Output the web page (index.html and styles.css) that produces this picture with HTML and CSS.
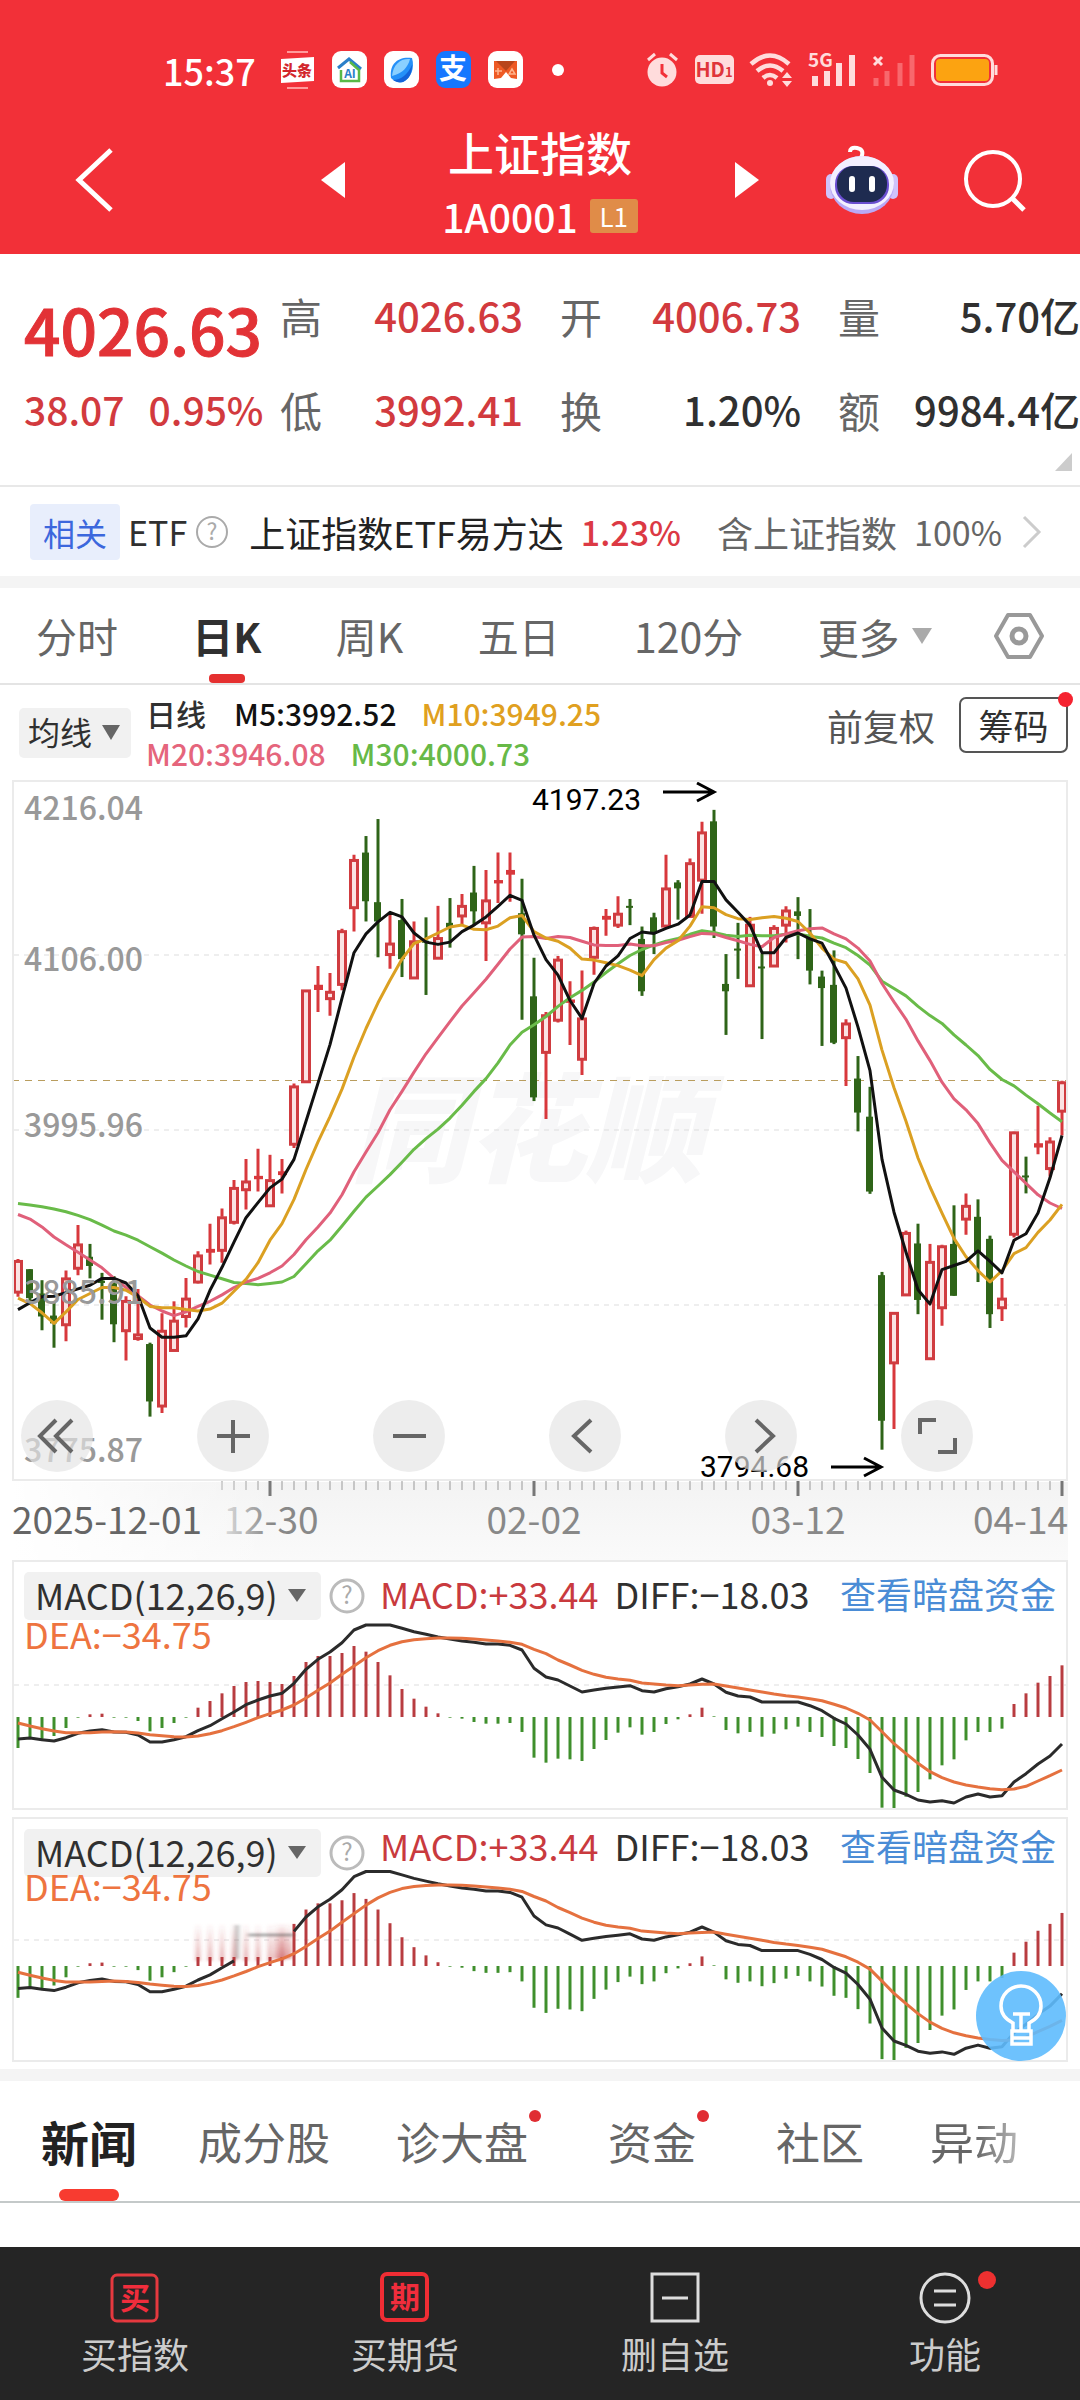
FILE: index.html
```html
<!DOCTYPE html>
<html lang="zh-CN">
<head>
<meta charset="UTF-8">
<meta name="viewport" content="width=device-width, initial-scale=1">
<title>上证指数 1A0001</title>
<link rel="stylesheet" href="styles.css">
</head>
<body>

<header class="header">
  <div class="status">
    <span class="status-time">15:37</span>
    <div class="status-apps">
      <svg width="35" height="38" viewBox="0 0 35 38"><path d="M7 1h21M7 37h21" stroke="#ff9a9a" stroke-width="2"/><path d="M1 8l33-2v24l-33 2z" fill="#fff"/><text x="17" y="25" class="ico-toutiao">头条</text></svg>
      <svg width="35" height="38" viewBox="0 0 35 38"><rect width="35" height="37" rx="9" fill="#fff"/><path d="M6 17L17 8l12 10" fill="none" stroke="#2a7fc9" stroke-width="3"/><path d="M9 19v11h18V19l-9-8" fill="none" stroke="#58b947" stroke-width="2.500"/><text x="18" y="27" class="ico-ai">AI</text></svg>
      <svg width="35" height="38" viewBox="0 0 35 38"><rect width="35" height="37" rx="9" fill="#fff"/><path d="M7 27C5 13 14 5 28 7c3 10-1 20-9 24-5 1-9-1-12-4z" fill="#2590f8"/><path d="M8 25C9 13 17 7 26 8c-2 8-7 14-18 17z" fill="#8ad0ff"/><path d="M9 29c8 0 15-6 19-15 0 9-3 14-9 17-4 1-7 0-10-2z" fill="#1462d8"/></svg>
      <svg width="35" height="38" viewBox="0 0 35 38"><rect width="35" height="37" rx="9" fill="#1677ff"/><text x="17" y="28" class="ico-zhi">支</text></svg>
      <svg width="35" height="38" viewBox="0 0 35 38"><rect width="35" height="37" rx="9" fill="#fff"/><path d="M6 10h9l3 3 3-3h8v18l-6-1-5-6-5 6-7 1z" fill="#ee5a24"/><path d="M8 10h19l-9 10z" fill="#b8451b"/><path d="M7 20h7M10 17v7M24 18l-3 5h6z" stroke="#ffb48c" fill="none" stroke-width="1.500"/></svg>
      <i class="status-dot"></i>
    </div>
    <div class="status-sys">
      <svg width="33" height="36" viewBox="0 0 33 36"><path d="M2 8l7-6M31 8l-7-6" stroke="#ffdcdc" stroke-width="3"/><circle cx="16" cy="20" r="14.500" fill="#ffdcdc"/><path d="M16 12v9l5 4" fill="none" stroke="#f23038" stroke-width="3"/></svg>
      <svg width="39" height="30" viewBox="0 0 39 30"><rect width="39" height="29" rx="5" fill="#ffdcdc"/><text x="19" y="22" class="ico-hd">HD<tspan font-size="13">1</tspan></text></svg>
      <svg width="43" height="34" viewBox="0 0 43 34"><g fill="none" stroke="#ffdcdc" stroke-width="4.500"><path d="M1 11q19-17 38 0M7 18q13-11 26 0M13 25q7-6 14 0"/></g><circle cx="20" cy="30" r="3" fill="#ffdcdc"/><path d="M32 25l5-6 5 6zM32 28l5 6 5-6z" fill="#ffdcdc"/></svg>
      <svg width="47" height="34" viewBox="0 0 47 34"><text x="-1" y="14" class="ico-5g">5G</text><path d="M6 33V23M18 33V18M30 33V10M43 33V2" stroke="#ffdcdc" stroke-width="6"/></svg>
      <svg width="43" height="34" viewBox="0 0 43 34"><path d="M2 4l8 8M10 4l-8 8" stroke="#ffdcdc" stroke-width="3"/><path d="M4 33V25M15 33V18M28 33V10M40 33V2" stroke="#f8686d" stroke-width="5"/></svg>
      <svg width="67" height="32" viewBox="0 0 67 32"><rect x="1.500" y="1.500" width="60" height="29" rx="8" fill="none" stroke="#ffdcdc" stroke-width="3"/><rect x="5" y="5" width="53" height="22" rx="4" fill="#fca311"/><path d="M65 11v10" stroke="#ffdcdc" stroke-width="3"/></svg>
    </div>
  </div>
  <div class="titlebar">
    <button class="icon-btn back" aria-label="返回"><svg width="38" height="66" viewBox="0 0 38 66"><path d="M35 3L3 33l32 30" fill="none" stroke="#fff" stroke-width="5"/></svg></button>
    <div class="switcher">
      <button class="icon-btn" aria-label="上一个"><svg width="24" height="36" viewBox="0 0 24 36"><path d="M24 0v36L0 18z" fill="#fff"/></svg></button>
      <div class="title">
        <h1>上证指数</h1>
        <p>1A0001<span class="level">L1</span></p>
      </div>
      <button class="icon-btn" aria-label="下一个"><svg width="24" height="36" viewBox="0 0 24 36"><path d="M0 0v36l24-18z" fill="#fff"/></svg></button>
    </div>
    <div class="actions">
      <button class="icon-btn" aria-label="智能助手">
        <svg width="72" height="68" viewBox="0 0 72 68"><path d="M35 12c3-6 1-9-4-10-5-1-7 1-7 4" fill="none" stroke="#fff" stroke-width="4"/><rect x="0" y="28" width="10" height="25" rx="5" fill="#cfc3fb"/><rect x="62" y="28" width="10" height="25" rx="5" fill="#cfc3fb"/><ellipse cx="36" cy="39" rx="32" ry="29" fill="#b9a9f6"/><ellipse cx="36" cy="37" rx="32" ry="27" fill="#f3f0ff"/><rect x="9" y="20" width="54" height="38" rx="18" fill="#6a4fd0"/><rect x="11" y="20" width="50" height="36" rx="17" fill="#1e2b50"/><path d="M26 33v10M46 33v10" stroke="#fff" stroke-width="6" stroke-linecap="round"/></svg>
      </button>
      <button class="icon-btn" aria-label="搜索"><svg width="62" height="62" viewBox="0 0 62 62"><circle cx="29" cy="30" r="27" fill="none" stroke="#fff" stroke-width="4"/><path d="M49 50l11 11" stroke="#fff" stroke-width="5"/></svg></button>
    </div>
  </div>
</header>

<section class="quote">
  <div class="price">4026.63</div>
  <div class="cell up"><span>高</span><b>4026.63</b></div>
  <div class="cell up"><span>开</span><b>4006.73</b></div>
  <div class="cell"><span>量</span><b>5.70亿</b></div>
  <div class="change"><b>38.07</b><b>0.95%</b></div>
  <div class="cell up"><span>低</span><b>3992.41</b></div>
  <div class="cell"><span>换</span><b>1.20%</b></div>
  <div class="cell"><span>额</span><b>9984.4亿</b></div>
  <i class="corner"></i>
</section>

<a class="etf" href="#">
  <span class="tag">相关</span>
  <span class="etf-label">ETF</span>
  <svg class="help" width="34" height="34" viewBox="0 0 34 34"><circle cx="17" cy="17" r="15" fill="none" stroke="#aaa" stroke-width="2"/><text x="17" y="25">?</text></svg>
  <span class="etf-name">上证指数ETF易方达</span>
  <span class="etf-pct">1.23%</span>
  <span class="etf-note">含上证指数</span>
  <span class="etf-share">100%</span>
  <svg class="etf-arrow" width="20" height="34" viewBox="0 0 20 34"><path d="M2 2l15 15L2 32" fill="none" stroke="#ccc" stroke-width="3"/></svg>
</a>

<nav class="periods">
  <button>分时</button>
  <button class="active">日K</button>
  <button>周K</button>
  <button>五日</button>
  <button>120分</button>
  <label class="drop drop-more"><select aria-label="更多周期"><option>更多</option></select></label>
  <button class="icon-btn" aria-label="设置"><svg width="50" height="48" viewBox="0 0 50 48"><path d="M14 3h22l12 21-12 21H14L2 24z" fill="none" stroke="#999" stroke-width="4" stroke-linejoin="round"/><circle cx="25" cy="24" r="7" fill="none" stroke="#999" stroke-width="5"/></svg></button>
</nav>

<section class="legend">
  <label class="drop drop-ma"><select aria-label="主图指标"><option>均线</option></select></label>
  <div class="ma-list">
    <div><span class="ma-day">日线</span><span class="ma5">M5:3992.52</span><span class="ma10">M10:3949.25</span></div>
    <div><span class="ma20">M20:3946.08</span><span class="ma30">M30:4000.73</span></div>
  </div>
  <button class="adjust">前复权</button>
  <button class="chips">筹码<i class="dot"></i></button>
</section>

<section class="kline">
  <svg id="kline" viewBox="0 0 1056 780"></svg>
  <div class="controls">
    <button aria-label="最早"><svg viewBox="0 0 72 72"><path d="M35 20L19 36l16 16M51 20L35 36l16 16"/></svg></button>
    <button aria-label="放大"><svg viewBox="0 0 72 72"><path d="M20 36h33M36 20v33"/></svg></button>
    <button aria-label="缩小"><svg viewBox="0 0 72 72"><path d="M20 36h33"/></svg></button>
    <button aria-label="左移"><svg viewBox="0 0 72 72"><path d="M42 20L25 36l17 16"/></svg></button>
    <button aria-label="右移"><svg viewBox="0 0 72 72"><path d="M31 20l17 16-17 16"/></svg></button>
    <button aria-label="全屏"><svg viewBox="0 0 72 72"><path d="M19 34V20h16M54 38v14H37"/></svg></button>
  </div>
</section>

<section class="macd">
  <svg id="macd-1" viewBox="0 0 1056 250"></svg>
  <div class="macd-head">
    <label class="drop drop-macd"><select aria-label="副图指标一"><option>MACD(12,26,9)</option></select></label>
    <svg class="help help-big" width="36" height="36" viewBox="0 0 36 36"><circle cx="18" cy="18" r="16" fill="none" stroke="#bbb" stroke-width="3"/><text x="18" y="26">?</text></svg>
    <span class="macd-val">MACD:+33.44</span>
    <span class="macd-diff">DIFF:−18.03</span>
    <a href="#">查看暗盘资金</a>
  </div>
  <div class="macd-dea">DEA:−34.75</div>
</section>

<section class="macd macd-second">
  <svg id="macd-2" viewBox="0 0 1056 245"></svg>
  <div class="macd-head">
    <label class="drop drop-macd"><select aria-label="副图指标二"><option>MACD(12,26,9)</option></select></label>
    <svg class="help help-big" width="36" height="36" viewBox="0 0 36 36"><circle cx="18" cy="18" r="16" fill="none" stroke="#bbb" stroke-width="3"/><text x="18" y="26">?</text></svg>
    <span class="macd-val">MACD:+33.44</span>
    <span class="macd-diff">DIFF:−18.03</span>
    <a href="#">查看暗盘资金</a>
  </div>
  <div class="macd-dea">DEA:−34.75</div>
  <button class="tip" aria-label="提示"><svg viewBox="0 0 90 90"><g fill="none" stroke="#fff" stroke-width="3.500"><path d="M37 60V52C27 47 25 41 25 35a20 20 0 0 1 40 0c0 6-2 12-12 17v8M36 60h19v13H36zM36 67h19M45 60V44M37 43h17"/></g></svg></button>
</section>

<nav class="news-tabs">
  <button class="active">新闻</button>
  <button>成分股</button>
  <button class="has-dot">诊大盘<i class="dot"></i></button>
  <button class="has-dot">资金<i class="dot"></i></button>
  <button>社区</button>
  <button class="fade">异动</button>
</nav>

<footer class="bottom">
  <button><svg width="50" height="52" viewBox="0 0 50 52"><rect x="2" y="3" width="45" height="46" rx="5" fill="none" stroke="#e5393f" stroke-width="3"/><text x="25" y="37" class="ico-buy">买</text></svg>买指数</button>
  <button><svg width="50" height="52" viewBox="0 0 50 52"><rect x="2" y="2" width="45" height="46" rx="5" fill="none" stroke="#f02d34" stroke-width="4"/><text x="25" y="36" class="ico-buy">期</text></svg>买期货</button>
  <button><svg width="50" height="52" viewBox="0 0 50 52"><path d="M2 2h46v47H2zM12 26h26" fill="none" stroke="#ddd" stroke-width="3"/></svg>删自选</button>
  <button class="more"><svg width="52" height="52" viewBox="0 0 52 52"><circle cx="26" cy="26" r="24" fill="none" stroke="#ddd" stroke-width="3"/><path d="M15 19h22M15 33h22" stroke="#ddd" stroke-width="3"/></svg>功能<i class="dot"></i></button>
</footer>

<script src="app.js"></script>
</body>
</html>
```

FILE: styles.css
```css
* { box-sizing: border-box; }
body {
  margin: 0;
  min-height: 100vh;
  display: flex;
  flex-direction: column;
  background: #fff;
  color: #303030;
  font-family: "Noto Sans CJK SC", "Noto Sans", sans-serif;
  font-size: 36px;
}
h1, p { margin: 0; }
a { text-decoration: none; color: inherit; }
svg { display: block; flex: none; overflow: visible; }
button, select {
  font: inherit;
  color: inherit;
  background: none;
  border: none;
  padding: 0;
  margin: 0;
  cursor: pointer;
  white-space: nowrap;
}
select { appearance: none; }
.icon-btn { display: block; }
.dot {
  position: absolute;
  width: 12px;
  height: 12px;
  border-radius: 50%;
  background: #e02d33;
}

/* header */
.header { background: #f23038; color: #fff; }
.status {
  height: 106px;
  padding: 34px 82px 0 163px;
  display: flex;
  align-items: center;
}
.status-time { font-size: 36px; font-weight: 500; line-height: 40px; }
.status-apps { display: flex; align-items: center; gap: 17px; margin-left: 24px; }
.status-dot { width: 12px; height: 12px; margin-left: 12px; border-radius: 50%; background: #fff; }
.status-sys { display: flex; align-items: center; gap: 16px; margin-left: auto; }
.ico-toutiao { font-size: 15px; font-weight: 900; fill: #d2262c; text-anchor: middle; }
.ico-ai { font-size: 12px; font-weight: 700; fill: #2a7fc9; text-anchor: middle; }
.ico-zhi { font-size: 28px; font-weight: 700; fill: #fff; text-anchor: middle; }
.ico-hd { font-size: 20px; font-weight: 700; fill: #e0343b; text-anchor: middle; }
.ico-5g { font-size: 19px; font-weight: 700; fill: #ffdcdc; }
.titlebar {
  height: 148px;
  display: grid;
  grid-template-columns: 1fr 438px 1fr;
  align-items: center;
}
.back { justify-self: start; margin-left: 76px; }
.switcher { display: flex; align-items: center; justify-content: space-between; }
.title { margin-top: 6px; text-align: center; }
.title h1 { font-size: 46px; font-weight: 500; line-height: 66px; }
.title p {
  display: flex;
  align-items: center;
  gap: 12px;
  font-size: 39px;
  font-weight: 500;
  line-height: 64px;
}
.level {
  width: 48px;
  background: #e08c48;
  border-radius: 3px;
  font-size: 26px;
  font-weight: 400;
  line-height: 34px;
}
.actions { display: flex; align-items: center; justify-content: flex-end; gap: 66px; padding-right: 54px; }

/* quote */
.quote {
  position: relative;
  display: grid;
  grid-template-columns: 256fr 280fr 278fr 242fr;
  grid-template-rows: 94px 94px;
  align-items: center;
  padding: 14px 0 29px 24px;
  border-bottom: 2px solid #e8e8e8;
}
.price { font-size: 64px; font-weight: 500; line-height: 64px; padding-top: 26px; color: #e23236; white-space: nowrap; -webkit-text-stroke: 1px #e23236; }
.change { display: flex; gap: 24px; font-size: 39px; color: #d23a3e; }
.quote b { font-weight: 500; white-space: nowrap; }
.cell { display: flex; align-items: center; justify-content: space-between; padding-right: 37px; }
.cell span { font-size: 42px; color: #666; }
.cell b { font-size: 40px; }
.cell:nth-child(4n) { padding-right: 0; }
.up b { color: #d23a3e; }
.corner {
  position: absolute;
  right: 8px;
  bottom: 14px;
  border-left: 17px solid transparent;
  border-bottom: 18px solid #ccc;
}

/* related etf */
.etf {
  display: flex;
  align-items: center;
  height: 89px;
  padding: 0 38px 0 30px;
  white-space: nowrap;
}
.tag {
  width: 90px;
  text-align: center;
  font-size: 32px;
  line-height: 56px;
  color: #3c67dd;
  background: #e8eefc;
  border-radius: 4px;
}
.etf-label { font-size: 34px; margin: 0 8px; }
.help text { font-size: 23px; fill: #aaa; text-anchor: middle; }
.etf-name { font-size: 36px; margin-left: 20px; color: #222; }
.etf-pct { font-size: 34px; font-weight: 500; margin-left: 17px; color: #dc3944; }
.etf-note { margin-left: 36px; color: #666; }
.etf-share { font-size: 34px; margin-left: 17px; color: #666; }
.etf-arrow { margin-left: auto; }

/* period tabs */
.periods {
  display: flex;
  align-items: center;
  justify-content: space-between;
  height: 109px;
  padding: 0 36px;
  border-top: 12px solid #f4f4f4;
  border-bottom: 2px solid #e4e4e4;
  color: #666;
  font-size: 41px;
}
.periods button { position: relative; line-height: 95px; }
.periods .active { color: #303030; font-weight: 700; }
.periods .active::after {
  content: "";
  position: absolute;
  left: 50%;
  bottom: 0;
  width: 36px;
  height: 9px;
  margin-left: -18px;
  border-radius: 4px;
  background: #e53030;
}
.drop { position: relative; display: block; }
.drop::after {
  content: "";
  position: absolute;
  top: 50%;
  right: 0;
  margin-top: -8px;
  border: 10px solid transparent;
  border-top: 16px solid #666;
  border-bottom: 0;
  pointer-events: none;
}
.drop select { display: block; }
.drop-more { margin-right: -12px; }
.drop-more select { padding-right: 32px; }
.drop-more::after { border-top-color: #aaa; }

/* moving average legend */
.legend {
  display: flex;
  align-items: center;
  height: 95px;
  padding: 0 12px 0 19px;
  white-space: nowrap;
}
.drop-ma, .drop-macd { background: #f1f1f1; border-radius: 5px; }
.drop-ma select { width: 112px; height: 50px; padding: 0 0 4px 9px; font-size: 32px; line-height: 46px; }
.drop-ma::after { right: 11px; border-width: 15px 9px 0; }
.ma-list { margin-left: 15px; font-size: 30px; font-weight: 500; line-height: 40px; }
.ma-list div { display: flex; gap: 25px; }
.ma-day { margin-right: 3px; }
.ma5 { color: #111; }
.ma10 { color: #e0a020; }
.ma20 { color: #e5657c; }
.ma30 { color: #67b947; }
.adjust { margin: -16px 0 0 auto; color: #555; }
.chips {
  position: relative;
  width: 109px;
  height: 56px;
  margin: -16px 0 0 24px;
  border: 2px solid #555;
  border-radius: 7px;
  font-size: 35px;
  line-height: 50px;
}
.chips .dot { top: -7px; right: -7px; width: 15px; height: 15px; background: #f52330; }

/* candles */
.kline, .macd { position: relative; margin: 0 12px; }
.kline > svg, .macd > svg { width: 100%; height: auto; }
.controls { position: absolute; top: 620px; left: 9px; display: flex; gap: 104px; }
.controls button {
  width: 72px;
  height: 72px;
  border-radius: 50%;
  background: rgba(228, 228, 228, 0.67);
}
.controls svg { fill: none; stroke: #666; stroke-width: 4; }
.frame { fill: none; stroke: #ebebeb; stroke-width: 2; }
.grid { stroke: #ddd; stroke-width: 1; stroke-dasharray: 5 5; }
.last { stroke: #b99d5e; stroke-width: 1; stroke-dasharray: 7 6; }
.line { fill: none; stroke-width: 3; stroke-linejoin: round; }
.axis { font-size: 32px; font-weight: 500; fill: #999; }
.mark { font-family: Roboto, sans-serif; font-size: 30px; fill: #000; }
.arrow { fill: none; stroke: #000; stroke-width: 3; }
.watermark { font-size: 118px; font-weight: 900; font-style: italic; fill: #f7f7f8; }
.date { font-size: 37px; fill: #888; text-anchor: middle; }

/* macd */
.macd-second { margin-top: 7px; }
.macd-head {
  position: absolute;
  top: 12px;
  left: 12px;
  right: 12px;
  height: 48px;
  display: flex;
  align-items: center;
  font-size: 36px;
  line-height: 48px;
  white-space: nowrap;
}
.drop-macd select { width: 297px; height: 48px; padding: 0 0 4px 11px; line-height: 44px; }
.drop-macd::after { right: 15px; margin-top: -7px; border-width: 13px 9px 0; }
.help-big { margin-left: 8px; }
.help-big text { font-size: 24px; }
.macd-val { margin-left: 15px; color: #c93a3e; }
.macd-diff { margin-left: 16px; }
.macd-head a { margin-left: auto; color: #4a8cd6; }
.macd-head span, .macd-head a { margin-bottom: 6px; }
.macd-dea { position: absolute; top: 53px; left: 12px; color: #ee7440; line-height: 40px; }
.macd-second .macd-head span, .macd-second .macd-head a { margin-bottom: 16px; }
.macd-second .macd-dea { top: 48px; }
.tip {
  position: absolute;
  right: 2px;
  bottom: 1px;
  width: 90px;
  height: 90px;
  border-radius: 50%;
  background: rgba(94, 187, 253, 0.9);
}

/* news tabs */
.news-tabs {
  display: flex;
  gap: 66px;
  margin-top: 7px;
  padding-left: 41px;
  border-top: 12px solid #f4f4f4;
  border-bottom: 2px solid #c4c9c9;
  font-size: 44px;
  color: #666;
  overflow: hidden;
}
.news-tabs button { position: relative; flex: none; height: 120px; line-height: 118px; }
.news-tabs .active { margin-right: -5px; font-size: 48px; font-weight: 700; color: #222; }
.news-tabs .active::after {
  content: "";
  position: absolute;
  left: 50%;
  bottom: 0;
  width: 60px;
  height: 12px;
  margin-left: -30px;
  border-radius: 6px;
  background: #f83b30;
}
.news-tabs .has-dot { padding-right: 14px; }
.news-tabs .dot { top: 29px; right: 1px; }
.fade {
  background: linear-gradient(90deg, #666 50%, #b5b5b5);
  background-clip: text;
  color: transparent;
}

/* bottom bar */
.bottom {
  display: grid;
  grid-template-columns: repeat(4, 1fr);
  height: 153px;
  margin-top: auto;
  padding-top: 25px;
  background: #252525;
  color: #ccc;
}
.bottom button {
  position: relative;
  display: flex;
  flex-direction: column;
  align-items: center;
  gap: 4px;
  font-size: 36px;
  line-height: 50px;
}
.ico-buy { font-size: 30px; font-weight: 700; fill: #f02d3c; text-anchor: middle; }
.bottom .dot { top: -1px; left: 50%; width: 18px; height: 18px; margin-left: 33px; background: #ee3030; }
```

FILE: app.js
```js
const STEP = 12;
const FIRST = 6;
const px = i => FIRST + i * STEP;

// [up, high, body top, body bottom, low], measured down from the top of the plot
const candles = [
  [1,1065,1068,1137,1147],[0,1087,1087,1150,1165],[0,1111,1140,1190,1220],[0,1158,1188,1205,1258],
  [1,1090,1106,1208,1244],[1,991,1032,1085,1100],[0,1032,1060,1080,1107],[0,1095,1112,1117,1197],
  [0,1102,1118,1207,1246],[1,1146,1155,1221,1286],[1,1130,1228,1238,1243],[0,1247,1250,1375,1408],
  [1,1183,1220,1385,1400],[1,1157,1198,1264,1264],[1,1106,1150,1190,1214],[1,1048,1056,1115,1118],
  [1,988,1045,1049,1077],[1,955,973,1046,1073],[1,893,909,985,990],[1,847,895,914,957],
  [1,825,886,889,918],[1,838,892,949,949],[1,847,876,880,922],[1,683,688,815,823],
  [1,479,479,679,679],[1,427,470,477,527],[1,442,482,498,535],[1,346,350,467,480],
  [1,185,195,300,352],[0,144,180,286,330],[0,107,288,330,408],[1,313,377,402,433],
  [0,281,327,412,451],[1,330,372,453,453],[0,321,372,374,490],[1,296,365,410,410],
  [0,279,333,343,387],[1,270,295,318,340],[0,209,267,308,340],[1,218,283,333,416],
  [1,180,242,245,290],[1,180,220,226,287],[0,237,312,358,544],[0,409,493,713,721],
  [1,527,533,615,760],[1,405,412,545,550],[1,460,502,505,599],[1,437,540,630,664],
  [1,341,343,408,446],[1,303,320,324,361],[1,275,312,338,344],[0,281,296,300,338],
  [0,341,368,482,492],[0,311,321,357,401],[1,185,257,340,344],[0,240,245,258,326],
  [1,193,202,319,322],[1,113,135,240,313],[0,87,112,341,366],[0,401,466,482,577],
  [0,333,389,391,455],[1,320,336,470,470],[0,400,428,432,586],[1,338,343,427,427],
  [1,297,305,338,376],[0,277,308,318,412],[0,303,360,437,467],[0,437,450,475,601],
  [0,393,468,594,597],[1,543,551,583,688],[0,623,672,746,787],[0,690,755,918,923],
  [0,1093,1100,1417,1480],[1,1180,1181,1291,1435],[1,1003,1007,1143,1143],[0,988,1031,1154,1185],
  [1,1032,1070,1282,1282],[1,1034,1036,1171,1210],[0,948,1032,1145,1145],[1,922,948,978,1012],
  [0,935,973,1050,1115],[0,1014,1021,1185,1215],[1,1106,1150,1171,1200],[1,787,788,1011,1018],
  [0,842,883,886,922],[1,731,815,820,837],[1,800,808,868,885],[1,677,679,743,796]
];

const averages = [
  { color: "#69bb49", data: [944,947,951,956,962,970,979,991,1004,1013,1024,1038,1052,1067,1080,1092,1100,1108,1116,1118,1121,1118,1115,1103,1075,1047,1024,993,961,930,906,881,854,826,803,782,758,730,700,672,638,599,571,555,537,515,496,480,462,441,422,404,391,381,373,367,358,350,354,360,363,360,361,361,358,357,362,366,377,387,404,425,460,476,492,515,535,552,577,599,622,652,674,688,708,727,747,766] },
  { color: "#e0607a", data: [968,978,995,1017,1034,1050,1067,1084,1107,1127,1145,1165,1178,1188,1180,1168,1157,1143,1127,1115,1107,1095,1080,1055,1023,995,965,925,875,832,790,740,700,658,618,583,548,514,485,456,423,390,364,363,367,363,365,373,381,382,382,379,383,383,376,371,363,356,357,365,372,380,385,365,357,350,346,344,357,368,388,416,465,505,543,590,633,680,716,740,770,812,850,875,900,925,943,955] },
  { color: "#dba022", data: [1150,1162,1182,1205,1180,1153,1140,1127,1127,1133,1148,1168,1171,1171,1175,1178,1174,1161,1135,1109,1073,1024,988,935,870,810,755,695,625,563,507,458,412,378,368,355,342,338,347,348,340,322,317,352,366,373,388,412,414,420,426,436,448,413,388,372,340,298,300,315,324,326,322,319,323,330,355,388,412,420,455,512,610,692,765,845,908,965,1020,1060,1090,1115,1090,1053,1040,1007,980,946] },
  { color: "#111", data: [1175,1160,1147,1146,1138,1130,1122,1107,1107,1117,1145,1215,1235,1235,1232,1195,1133,1083,1028,975,942,910,891,848,765,682,598,497,398,357,331,310,320,355,375,380,375,352,338,320,297,273,284,360,413,447,502,541,465,427,405,367,353,356,345,336,316,243,243,283,310,338,398,398,365,355,368,377,425,475,560,655,848,963,1050,1132,1163,1088,1079,1070,1047,1070,1095,1024,1010,965,888,796] }
];

// macd bars are signed from the zero line, the two lines are measured downwards
const bars = [-93,-65,-68,-57,-33,-2,8,10,-2,-2,-12,-43,-33,-18,-2,28,48,71,93,105,108,105,99,123,165,183,183,192,213,196,165,125,84,55,31,11,-2,-5,-15,-20,-20,-18,-45,-122,-137,-125,-127,-132,-96,-69,-47,-31,-53,-45,-21,-7,8,28,2,-39,-49,-45,-59,-50,-37,-29,-45,-60,-87,-93,-126,-168,-272,-279,-239,-225,-187,-145,-127,-70,-45,-45,-35,39,71,103,123,155];
const diff = [567,564,569,573,563,550,543,539,546,547,555,576,576,569,560,542,527,506,486,464,450,438,430,400,358,328,306,278,240,225,225,225,235,245,253,261,267,273,277,282,282,286,300,355,381,390,408,426,420,415,411,407,422,426,416,410,402,387,402,427,438,441,456,456,456,456,467,482,505,522,555,598,682,720,733,750,756,752,759,741,732,741,737,696,671,642,618,582];
const dea = [519,528,536,543,548,548,548,546,545,546,549,554,557,560,561,558,551,542,530,517,503,491,480,465,444,421,399,373,348,323,302,286,275,269,266,264,264,265,267,270,273,277,283,298,311,330,345,361,373,382,387,391,399,402,405,407,405,403,402,408,414,420,426,432,437,441,446,452,463,474,490,510,545,581,611,640,665,683,696,705,711,716,719,717,709,693,677,660];

const line = (data, color, y, from = 0) => {
  const pts = data.map((v, i) => `${px(i + from)},${y(v).toFixed(1)}`).join(" ");
  return `<polyline class="line" stroke="${color}" points="${pts}"/>`;
};

function drawKline() {
  const y = v => (v - 22) * 700 / 1524;
  let s = `<defs>
    <linearGradient id="fadeX"><stop offset="0" stop-color="#fff"/><stop offset="0.25" stop-color="#fff" stop-opacity="0"/></linearGradient>
    <linearGradient id="axisBg" x2="0" y2="1"><stop offset="0" stop-color="#f3f3f3"/><stop offset="1" stop-color="#fafafa"/></linearGradient>
    <linearGradient id="dateFade"><stop offset="0" stop-color="#ddd"/><stop offset="0.5" stop-color="#888"/></linearGradient>
  </defs>`;
  s += `<text class="watermark" x="338" y="393">同花顺</text>`;
  [175, 350, 525].forEach(g => { s += `<path class="grid" d="M2 ${g}H1054"/>`; });
  s += `<path class="last" d="M0 300.5H1054"/>`;

  candles.forEach(([up, high, top, bottom, low], i) => {
    const x = px(i);
    const t = y(top), b = y(bottom), h = y(high), l = y(low);
    if (up) {
      s += `<path d="M${x} ${h}V${t}M${x} ${b}V${l}" stroke="#d8383c" stroke-width="3"/>`;
      s += b - t < 4
        ? `<rect x="${x - 4}" y="${t - 1}" width="9" height="${b - t + 2}" fill="#d8383c"/>`
        : `<rect x="${x - 3.5}" y="${t + 1}" width="7" height="${b - t - 1}" fill="#fbe3e3" stroke="#d03c40" stroke-width="3"/>`;
    } else {
      s += `<path d="M${x} ${h}V${l}" stroke="#2f6418" stroke-width="3"/>`;
      s += `<rect x="${x - 4}" y="${t}" width="7" height="${Math.max(b - t, 2)}" fill="#2f6418"/>`;
    }
  });
  averages.forEach(a => { s += line(a.data, a.color, y); });

  [["4216.04", 40], ["4106.00", 191], ["3995.96", 357], ["3885.91", 524], ["3775.87", 682]].forEach(([t, ty]) => {
    s += `<text class="axis" x="12" y="${ty}">${t}</text>`;
  });
  s += `<text class="mark" x="520" y="30">4197.23</text><path class="arrow" d="M651 12h50M685 3l17 9-17 9"/>`;
  s += `<text class="mark" x="688" y="697">3794.68</text><path class="arrow" d="M819 687h50M852 678l17 9-17 9"/>`;
  s += `<rect class="frame" x="1" y="1" width="1054" height="699"/>`;

  // time axis
  s += `<rect x="0" y="702" width="1056" height="78" fill="url(#axisBg)"/>`;
  for (let i = 17; i < 88; i++) {
    const major = i % 22 === 21;
    s += `<path d="M${px(i)} 701v${major ? 15 : 9}" stroke="${major ? "#777" : "#999"}" stroke-width="${major ? 3 : 1}"/>`;
  }
  s += `<rect x="0" y="702" width="1056" height="78" fill="url(#fadeX)"/>`;
  s += `<text class="date" style="text-anchor:start;fill:#666" x="0" y="754">2025-12-01</text>`;
  s += `<text class="date" style="fill:url(#dateFade)" x="259" y="754">12-30</text>`;
  s += `<text class="date" x="522" y="754">02-02</text><text class="date" x="786" y="754">03-12</text>`;
  s += `<text class="date" style="text-anchor:end" x="1056" y="754">04-14</text>`;
  document.getElementById("kline").innerHTML = s;
}

function drawMacd(id, height, zero, grid, scale, smear) {
  const y = v => zero + (v - 501) / 3 * scale;
  let s = `<path class="grid" d="M2 ${grid}H1054"/>`;
  bars.forEach((v, i) => {
    if (smear && i > 14 && i < 23) return;
    s += `<path d="M${px(i)} ${zero}V${y(501 - v)}" stroke="${v > 5 ? "#b83c40" : "#3f8f2c"}" stroke-width="3"/>`;
  });
  if (smear) {
    s += `<defs><linearGradient id="smear" x2="0" y2="1"><stop offset="0" stop-color="#c0393c" stop-opacity="0"/><stop offset="1" stop-color="#c0393c" stop-opacity="0.5"/></linearGradient>
      <filter id="soft" x="-20%" y="-20%" width="140%" height="140%"><feGaussianBlur stdDeviation="2 1"/></filter></defs>`;
    s += `<g filter="url(#soft)">`;
    for (let i = 15; i < 23; i++) {
      s += `<rect x="${px(i) - 2}" y="106" width="4" height="38" fill="url(#smear)"/>`;
    }
    s += `<rect x="262" y="106" width="18" height="36" fill="url(#smear)"/>`;
    s += `<path d="M225 108V142M236 118H282" stroke="#555" stroke-opacity="0.5" stroke-width="3"/></g>`;
    for (let i = 15; i < 23; i++) {
      s += `<path d="M${px(i)} ${zero}v-9" stroke="#b83c40" stroke-width="3"/>`;
    }
    s += line(diff.slice(0, 19), "#2b2b2b", y) + line(diff.slice(23), "#2b2b2b", y, 23);
  } else {
    s += line(diff, "#2b2b2b", y);
  }
  s += line(dea, "#e5713f", y);
  s += `<rect class="frame" x="1" y="1" width="1054" height="${height - 2}"/>`;
  document.getElementById(id).innerHTML = s;
}

drawKline();
drawMacd("macd-1", 250, 157, 125, 1, false);
drawMacd("macd-2", 245, 149, 123, 1.027, true);
```
